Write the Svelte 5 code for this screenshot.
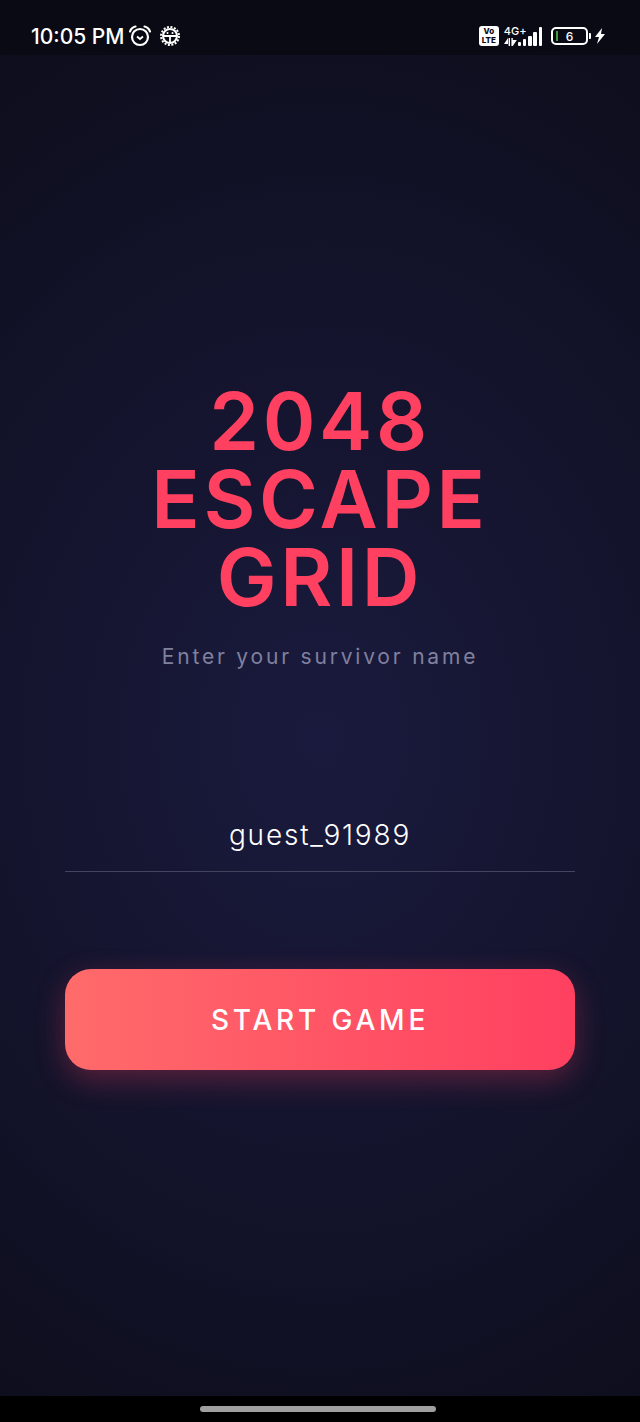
<script lang="ts">
  let name = $state("guest_91989");
  const bars = [4, 7, 10, 14, 19];
</script>

<div class="screen">
  <header class="status">
    <div class="left">
      <span class="time">10:05 PM</span>
      <svg class="alarm" viewBox="0 0 24 24" width="24" height="24" fill="none" stroke="#fff">
        <circle cx="12" cy="13" r="8" stroke-width="2.2" />
        <path d="M9 12.5l3 2.5 3-2.5" stroke-width="1.8" />
        <path d="M2 7.5C3 4.5 5 3 7.5 2.5M22 7.5C21 4.5 19 3 16.5 2.5" stroke-width="2.2" stroke-linecap="round" />
      </svg>
      <svg class="gear" viewBox="0 0 22 22" width="22" height="22" fill="none" stroke="#fff">
        <circle cx="11" cy="11" r="7" stroke-width="2" />
        <circle cx="11" cy="11" r="9" stroke-width="2" stroke-dasharray="2 1.55" />
        <path d="M4.5 11h13M11 11v7" stroke-width="1.8" />
        <path d="M8.5 8h.01M13.5 8h.01" stroke-width="2" stroke-linecap="round" />
      </svg>
    </div>
    <div class="right">
      <div class="volte"><span>Vo</span><span>LTE</span></div>
      <div class="signal">
        <span class="net">4G+</span>
        <svg class="arrows" viewBox="0 0 13 8" width="13" height="8" fill="#fff">
          <path d="M4 0v6H0zM4.6 0H6v8H4.6zM7.4 0h1.4v8H7.4zM8.8 8V2h4z" />
        </svg>
      </div>
      <div class="bars">
        {#each bars as h}
          <i style="height: {h}px"></i>
        {/each}
      </div>
      <div class="battery">
        <div class="shell"><i class="level"></i><span>6</span></div>
        <i class="nub"></i>
      </div>
      <svg class="bolt" viewBox="0 0 12 16" width="12" height="16" fill="#fff">
        <path d="M8 0L1 9h4l-2 7 8-10H7z" />
      </svg>
    </div>
  </header>

  <main class="content">
    <h1><span>2048</span><span>ESCAPE</span><span>GRID</span></h1>
    <p class="sub">Enter your survivor name</p>
    <input class="name" bind:value={name} aria-label="Survivor name" />
    <button class="start">START GAME</button>
  </main>

  <footer class="nav"><i></i></footer>
</div>

<style>
  :global(body) {
    margin: 0;
    background: #000;
  }
  .screen {
    width: 640px;
    height: 1422px;
    display: flex;
    flex-direction: column;
    font-family: Inter, "Liberation Sans", sans-serif;
    color: #fff;
    overflow: hidden;
  }
  .status {
    height: 55px;
    flex: none;
    background: #0a0a14;
    box-sizing: border-box;
    padding: 17px 34px 0 31px;
    display: flex;
    align-items: center;
    justify-content: space-between;
  }
  .left, .right {
    display: flex;
    align-items: center;
  }
  .time {
    font-size: 21px;
    font-weight: 500;
    margin-right: 4px;
  }
  .alarm { margin-right: 7px; }
  .volte {
    width: 20px;
    height: 20px;
    background: #fff;
    color: #0a0a14;
    border-radius: 3px;
    display: flex;
    flex-direction: column;
    align-items: center;
    font-size: 8px;
    font-weight: 800;
    line-height: 9px;
    padding-top: 1px;
    box-sizing: border-box;
    margin-right: 5px;
  }
  .signal {
    display: flex;
    flex-direction: column;
    align-items: flex-start;
    width: 22px;
  }
  .net {
    font-size: 11px;
    line-height: 11px;
    font-weight: 500;
  }
  .arrows { margin-top: 1px; }
  .bars {
    display: flex;
    align-items: flex-end;
    gap: 1.8px;
    height: 19px;
    margin-right: 9px;
    margin-left: -8px;
  }
  .bars i {
    width: 3.4px;
    background: #fff;
    border-radius: 1px;
  }
  .battery {
    display: flex;
    align-items: center;
    margin-right: 3px;
  }
  .shell {
    width: 37px;
    height: 18px;
    border: 2px solid #fff;
    border-radius: 5px;
    box-sizing: border-box;
    position: relative;
    display: flex;
    align-items: center;
    justify-content: center;
    font-size: 12px;
    font-weight: 500;
  }
  .level {
    position: absolute;
    left: 3px;
    top: 2px;
    bottom: 2px;
    width: 2px;
    background: #3f9a3c;
  }
  .nub {
    width: 2px;
    height: 6px;
    background: #fff;
    margin-left: 1px;
    border-radius: 0 1px 1px 0;
  }
  .content {
    flex: 1;
    background: radial-gradient(ellipse 640px 800px at 50% 51%, #1a1a3e 0%, #0f0f20 90%, #0d0d1c 100%);
    display: flex;
    flex-direction: column;
    align-items: center;
    padding: 0 65px;
    box-sizing: border-box;
  }
  h1 {
    margin: 327px 0 0;
    font-size: 80px;
    line-height: 78px;
    font-weight: 600;
    letter-spacing: 3.6px;
    color: #ff4060;
    text-align: center;
  }
  h1 span { display: block; }
  .sub {
    margin: 27px 0 0;
    font-size: 21px;
    line-height: 28px;
    letter-spacing: 2.8px;
    color: #80809f;
  }
  .name {
    margin-top: 127px;
    width: 100%;
    height: 74px;
    box-sizing: border-box;
    background: none;
    border: none;
    border-bottom: 1px solid #44445f;
    outline: none;
    color: #fff;
    font: 300 28px Inter, sans-serif;
    letter-spacing: 1.8px;
    text-align: center;
  }
  .start {
    margin-top: 97px;
    width: 100%;
    height: 101px;
    border: none;
    border-radius: 26px;
    background: linear-gradient(90deg, #ff6b6b, #ff4060);
    box-shadow: 0 10px 30px rgba(255, 64, 96, 0.3);
    color: #fff;
    font: 500 28px Inter, sans-serif;
    letter-spacing: 3.8px;
  }
  .nav {
    height: 26px;
    flex: none;
    background: #000;
    display: flex;
    justify-content: center;
    align-items: flex-start;
    padding: 10px 4px 0 0;
    box-sizing: border-box;
  }
  .nav i {
    width: 236px;
    height: 6px;
    border-radius: 3px;
    background: #a0a0a0;
  }
</style>
